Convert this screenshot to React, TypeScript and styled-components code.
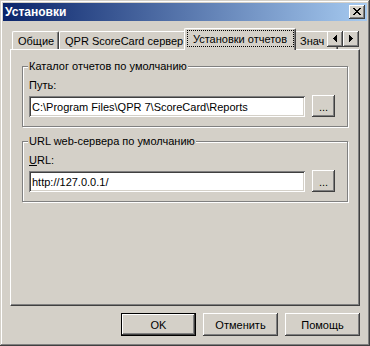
import styled, { createGlobalStyle } from "styled-components";

const GlobalStyle = createGlobalStyle`
  html, body {
    margin: 0;
    padding: 0;
    background: #d4d0c8;
  }
  body {
    font-family: "Liberation Sans", Arial, sans-serif;
    font-size: 11px;
    color: #000;
  }
`;

const Window = styled.div`
  box-sizing: border-box;
  width: 370px;
  height: 346px;
  padding: 3px;
  background: #d4d0c8;
  box-shadow: inset -1px -1px #404040, inset 1px 1px #d4d0c8,
    inset -2px -2px #808080, inset 2px 2px #fff;
  display: flex;
  flex-direction: column;
`;

const TitleBar = styled.div`
  height: 18px;
  display: flex;
  align-items: center;
  justify-content: space-between;
  padding: 0 2px 0 2px;
  background: linear-gradient(to right, #0a246a, #a6caf0);
`;

const Title = styled.span`
  color: #fff;
  font-weight: bold;
  font-size: 12px;
`;

const Raised = styled.div`
  box-sizing: border-box;
  background: #d4d0c8;
  box-shadow: inset -1px -1px #404040, inset 1px 1px #fff,
    inset -2px -2px #808080, inset 2px 2px #d4d0c8;
  display: flex;
  align-items: center;
  justify-content: center;
`;

const CloseButton = styled(Raised)`
  width: 16px;
  height: 14px;
  padding: 0 1px 1px 0;
`;

const Body = styled.div`
  flex: 1;
  display: flex;
  flex-direction: column;
  padding: 7px 7px 0 7px;
`;

const TabRow = styled.div`
  position: relative;
  height: 21px;
  display: flex;
  align-items: flex-end;
  padding-left: 2px;
`;

const Tab = styled.div<{ $w: number; $active?: boolean }>`
  box-sizing: border-box;
  flex: none;
  width: ${(p) => p.$w}px;
  height: ${(p) => (p.$active ? 22 : 18)}px;
  margin: ${(p) => (p.$active ? "0 -2px -1px -2px" : "0")};
  position: relative;
  z-index: ${(p) => (p.$active ? 2 : 1)};
  background: #d4d0c8;
  border-top: 1px solid #fff;
  border-left: 1px solid #fff;
  border-right: 1px solid #404040;
  border-top-left-radius: 2px;
  border-top-right-radius: 2px;
  box-shadow: inset -1px 0 #808080;
  display: flex;
  align-items: center;
  justify-content: ${(p) => (p.$active ? "center" : "flex-start")};
  padding-left: ${(p) => (p.$active ? 0 : 5)}px;
  padding-bottom: ${(p) => (p.$active ? 2 : 0)}px;
  white-space: nowrap;
`;

const FocusBox = styled.span`
  box-sizing: border-box;
  width: 107px;
  height: 17px;
  border: 1px dotted #000;
  display: flex;
  align-items: center;
  justify-content: center;
`;

const Scroller = styled.div`
  position: absolute;
  right: 1px;
  top: 3px;
  z-index: 3;
  display: flex;
`;

const ArrowButton = styled(Raised)`
  width: 16px;
  height: 16px;
  padding: 0 1px 1px 0;
`;

const Panel = styled.div`
  box-sizing: border-box;
  height: 257px;
  border-top: 1px solid #fff;
  border-left: 1px solid #fff;
  border-right: 1px solid #404040;
  border-bottom: 1px solid #404040;
  box-shadow: inset -1px -1px #808080;
  padding: 10px 11px 0 11px;
  display: flex;
  flex-direction: column;
  gap: 8px;
`;

const Group = styled.fieldset`
  margin: 0;
  padding: 6px 6px 9px 6px;
  border: 1px solid #808080;
  box-shadow: inset 1px 1px #fff, 1px 1px #fff;
  min-width: 0;
`;

const Legend = styled.legend`
  padding: 0 1px;
  margin-left: -1px;
  background: #d4d0c8;
  line-height: 13px;
`;

const Label = styled.div`
  line-height: 13px;
  margin-bottom: 3px;
`;

const FieldRow = styled.div`
  display: flex;
  align-items: flex-end;
  gap: 7px;
`;

const TextField = styled.input`
  box-sizing: border-box;
  width: 276px;
  height: 21px;
  margin: 0;
  border: none;
  outline: none;
  padding: 0 3px;
  background: #fff;
  font-family: "Liberation Sans", Arial, sans-serif;
  font-size: 11px;
  color: #000;
  box-shadow: inset 1px 1px #808080, inset -1px -1px #fff,
    inset 2px 2px #404040, inset -2px -2px #d4d0c8;
`;

const BrowseButton = styled(Raised)`
  width: 23px;
  height: 22px;
  align-items: flex-end;
  padding-bottom: 5px;
  line-height: 10px;
`;

const ButtonBar = styled.div`
  display: flex;
  justify-content: flex-end;
  gap: 7px;
  margin-top: 7px;
`;

const DialogButton = styled(Raised)<{ $default?: boolean }>`
  width: 75px;
  height: 23px;
  ${(p) =>
    p.$default &&
    `box-shadow: inset 1px 1px #000, inset -1px -1px #000,
      inset -2px -2px #404040, inset 2px 2px #fff, inset -3px -3px #808080;`}
`;

const pixels = (rows: string[]) =>
  rows
    .map((r, y) =>
      r
        .split("")
        .map((c, x) => (c === "X" ? `M${x} ${y}h1v1h-1z` : ""))
        .join("")
    )
    .join("");

const closeGlyph = pixels([
  "XX....XX",
  ".XX..XX.",
  "..XXXX..",
  "...XX...",
  "..XXXX..",
  ".XX..XX.",
  "XX....XX",
]);

const leftGlyph = pixels(["...X", "..XX", ".XXX", "XXXX", ".XXX", "..XX", "...X"]);
const rightGlyph = pixels(["X...", "XX..", "XXX.", "XXXX", "XXX.", "XX..", "X..."]);

const Glyph = ({ d, w, h }: { d: string; w: number; h: number }) => (
  <svg width={w} height={h} viewBox={`0 0 ${w} ${h}`} shapeRendering="crispEdges">
    <path d={d} fill="#000" />
  </svg>
);

export default function App() {
  return (
    <>
      <GlobalStyle />
      <Window>
        <TitleBar>
          <Title>Установки</Title>
          <CloseButton>
            <Glyph d={closeGlyph} w={8} h={7} />
          </CloseButton>
        </TitleBar>
        <Body>
          <TabRow>
            <Tab $w={47}>Общие</Tab>
            <Tab $w={127}>QPR ScoreCard сервер</Tab>
            <Tab $w={112} $active>
              <FocusBox>Установки отчетов</FocusBox>
            </Tab>
            <Tab $w={44}>Знач</Tab>
            <Scroller>
              <ArrowButton>
                <Glyph d={leftGlyph} w={4} h={7} />
              </ArrowButton>
              <ArrowButton>
                <Glyph d={rightGlyph} w={4} h={7} />
              </ArrowButton>
            </Scroller>
          </TabRow>
          <Panel>
            <Group>
              <Legend>Каталог отчетов по умолчанию</Legend>
              <Label>Путь:</Label>
              <FieldRow>
                <TextField readOnly defaultValue="C:\Program Files\QPR 7\ScoreCard\Reports" />
                <BrowseButton>...</BrowseButton>
              </FieldRow>
            </Group>
            <Group>
              <Legend>URL web-сервера по умолчанию</Legend>
              <Label>
                <u>U</u>RL:
              </Label>
              <FieldRow>
                <TextField readOnly defaultValue="http://127.0.0.1/" />
                <BrowseButton>...</BrowseButton>
              </FieldRow>
            </Group>
          </Panel>
          <ButtonBar>
            <DialogButton $default>OK</DialogButton>
            <DialogButton>Отменить</DialogButton>
            <DialogButton>Помощь</DialogButton>
          </ButtonBar>
        </Body>
      </Window>
    </>
  );
}
